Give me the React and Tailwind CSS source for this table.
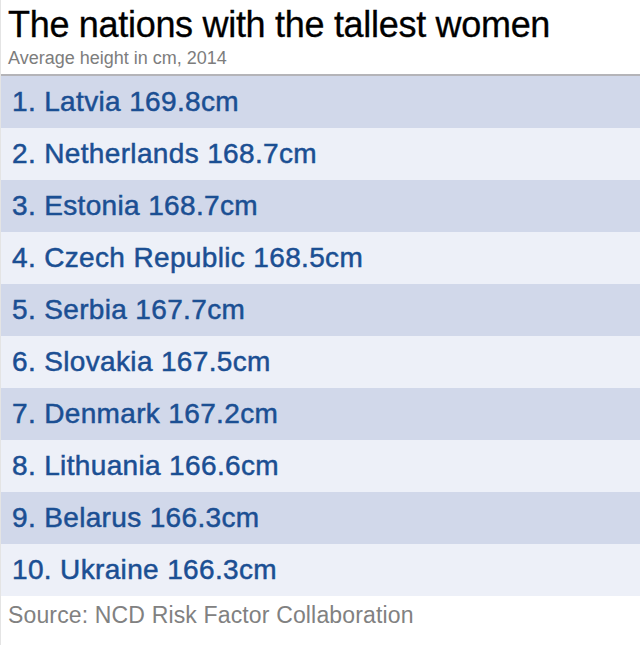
import React from "react";

const rows = [
    "1. Latvia 169.8cm",
    "2. Netherlands 168.7cm",
    "3. Estonia 168.7cm",
    "4. Czech Republic 168.5cm",
    "5. Serbia 167.7cm",
    "6. Slovakia 167.5cm",
    "7. Denmark 167.2cm",
    "8. Lithuania 166.6cm",
    "9. Belarus 166.3cm",
    "10. Ukraine 166.3cm",
];

const App = () => {
    return (
        <div className="w-[640px] h-[645px] bg-white border-l border-[#e4e4e4] font-['Liberation_Sans',Arial,sans-serif]">
            <div className="h-[74px] flex flex-col pt-[2px]">
                <h1 className="pl-[7px] text-[36px] leading-[46px] text-black tracking-[-0.3px] [-webkit-text-stroke:0.3px_black]">
                    The nations with the tallest women
                </h1>
                <p className="pl-[7px] text-[18px] leading-[20px] text-[#7d7d7d]">
                    Average height in cm, 2014
                </p>
            </div>
            <div className="border-t-2 border-[#b4b4b8]">
                {rows.map((row, i) => (
                    <div
                        key={row}
                        className={
                            "h-[52px] flex items-center pl-[11px] text-[28px] tracking-[0.35px] text-[#1b4f93] [-webkit-text-stroke:0.5px_#1b4f93] " +
                            (i % 2 === 0 ? "bg-[#d1d8ea]" : "bg-[#edf0f8]")
                        }
                    >
                        {row}
                    </div>
                ))}
            </div>
            <p className="pl-[7px] pt-[4px] text-[23px] tracking-[0.15px] leading-[30px] text-[#818181]">
                Source: NCD Risk Factor Collaboration
            </p>
        </div>
    );
};

export default App;
